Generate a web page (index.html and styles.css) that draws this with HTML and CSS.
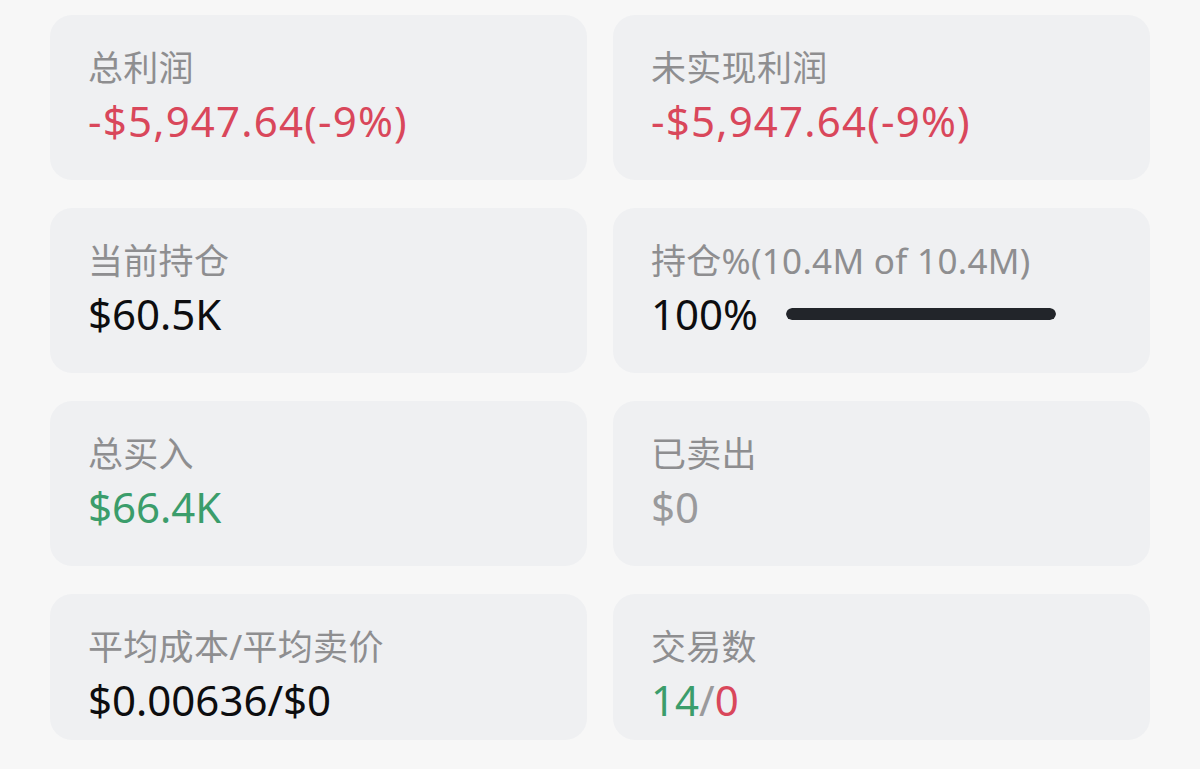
FILE: index.html
```html
<!DOCTYPE html>
<html lang="zh-CN">
<head>
<meta charset="utf-8">
<title>持仓统计</title>
<link rel="stylesheet" href="styles.css">
</head>
<body>
<main class="stats">
  <section class="card">
    <div class="label">总利润</div>
    <div class="value red wide">-$5,947.64(-9%)</div>
  </section>
  <section class="card">
    <div class="label">未实现利润</div>
    <div class="value red wide">-$5,947.64(-9%)</div>
  </section>
  <section class="card">
    <div class="label">当前持仓</div>
    <div class="value">$60.5K</div>
  </section>
  <section class="card">
    <div class="label">持仓%(10.4M of 10.4M)</div>
    <div class="value progress-row">
      <span>100%</span>
      <span class="bar"><span class="bar-fill" style="width:100%"></span></span>
    </div>
  </section>
  <section class="card">
    <div class="label">总买入</div>
    <div class="value green">$66.4K</div>
  </section>
  <section class="card">
    <div class="label">已卖出</div>
    <div class="value grey">$0</div>
  </section>
  <section class="card">
    <div class="label">平均成本/平均卖价</div>
    <div class="value">$0.00636/$0</div>
  </section>
  <section class="card">
    <div class="label">交易数</div>
    <div class="value"><span class="green">14</span><span class="grey">/</span><span class="red">0</span></div>
  </section>
</main>
</body>
</html>
```

FILE: styles.css
```css
html, body {
  margin: 0;
  padding: 0;
  background: #f7f7f7;
}

body {
  width: 1200px;
  height: 769px;
  overflow: hidden;
  font-family: "Noto Sans", "Noto Sans CJK SC", sans-serif;
}

.stats {
  display: grid;
  grid-template-columns: 537px 537px;
  grid-template-rows: 165px 165px 165px 146px;
  column-gap: 26px;
  row-gap: 28px;
  padding: 15px 50px 0 50px;
}

.card {
  background: #eff0f2;
  border-radius: 22px;
  padding: 34px 38px 0 38px;
  box-sizing: border-box;
}

.label {
  font-size: 35px;
  line-height: 38px;
  color: #8e8e90;
  white-space: nowrap;
  letter-spacing: 0.3px;
}

.value {
  margin-top: 10px;
  font-size: 42px;
  line-height: 48px;
  color: #0d0d0f;
  white-space: nowrap;
}

.wide {
  letter-spacing: 1.2px;
}

.red { color: #d9475b; }
.green { color: #3b9d6b; }
.grey { color: #9a9a9c; }

.progress-row {
  display: flex;
  align-items: center;
  gap: 28px;
}

.bar {
  display: block;
  width: 270px;
  height: 12px;
  border-radius: 6px;
  background: #d8dadd;
  overflow: hidden;
}

.bar-fill {
  display: block;
  height: 100%;
  background: #22252a;
  border-radius: 6px;
}
```
